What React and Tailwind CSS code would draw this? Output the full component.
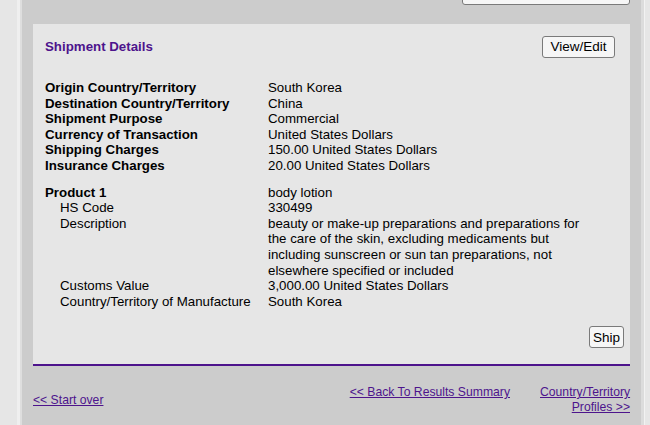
import React from 'react';

const font = { fontFamily: '"Liberation Sans", Arial, sans-serif' };

const summary = [
  ['Origin Country/Territory', 'South Korea'],
  ['Destination Country/Territory', 'China'],
  ['Shipment Purpose', 'Commercial'],
  ['Currency of Transaction', 'United States Dollars'],
  ['Shipping Charges', '150.00 United States Dollars'],
  ['Insurance Charges', '20.00 United States Dollars'],
];

const product = [
  ['HS Code', '330499'],
  [
    'Description',
    'beauty or make-up preparations and preparations for the care of the skin, excluding medicaments but including sunscreen or sun tan preparations, not elsewhere specified or included',
  ],
  ['Customs Value', '3,000.00 United States Dollars'],
  ['Country/Territory of Manufacture', 'South Korea'],
];

function Row({ label, value, bold, indent }) {
  return (
    <div className="flex">
      <div className={`w-[223px] shrink-0 ${bold ? 'font-bold' : ''} ${indent ? 'pl-[15px]' : ''}`}>{label}</div>
      <div className="w-[325px]">{value}</div>
    </div>
  );
}

function Button({ children, className = '' }) {
  return (
    <button
      className={`flex items-center justify-center bg-[#f6f6f6] border border-[#7a7a7a] rounded-[3px] text-[13.5px] text-black leading-none whitespace-nowrap ${className}`}
    >
      {children}
    </button>
  );
}

export default function App() {
  return (
    <div className="w-[650px] h-[425px] overflow-hidden flex bg-[#e6e6e6] text-black" style={font}>
      <div className="w-[17px] shrink-0" />
      <div className="w-[3px] shrink-0 bg-[#efefef]" />
      <div className="w-[2px] shrink-0 bg-[#dedede]" />
      <div className="w-[619px] shrink-0 bg-[#cccccc] pl-[11px] pr-[11px]">
        <div className="flex justify-end mt-[-17px]">
          <Button className="w-[168px] h-[22px] bg-[#f3f3f3]">Print selected documents</Button>
        </div>
        <div className="mt-[19px] bg-[#e6e6e6] border-b-2 border-[#4d148c] px-[12px] pt-[12px] pb-[16px] text-[13.3px] leading-[15.6px]">
          <div className="flex items-center justify-between pr-[3px]">
            <h2 className="font-bold text-[#4d148c] text-[13.3px]">Shipment Details</h2>
            <Button className="w-[73px] h-[22px]">View/Edit</Button>
          </div>
          <div className="mt-[22px]">
            {summary.map(([l, v]) => (
              <Row key={l} label={l} value={v} bold />
            ))}
          </div>
          <div className="mt-[11px]">
            <Row label="Product 1" value="body lotion" bold />
            {product.map(([l, v]) => (
              <Row key={l} label={l} value={v} indent />
            ))}
          </div>
          <div className="flex justify-end mt-[17px] mr-[-6px]">
            <Button className="w-[35px] h-[22px]">Ship</Button>
          </div>
        </div>
        <div className="flex items-center justify-between mt-[19px] text-[12.2px] leading-[15px] text-[#4d148c]">
          <a href="#" className="underline">&lt;&lt; Start over</a>
          <div className="flex items-start gap-[30px]">
            <a href="#" className="underline">&lt;&lt; Back To Results Summary</a>
            <a href="#" className="underline text-right w-[90px]">Country/Territory Profiles &gt;&gt;</a>
          </div>
        </div>
      </div>
      <div className="w-[3px] shrink-0 bg-[#dcdcdc]" />
      <div className="w-[1px] shrink-0 bg-[#f2f2f2]" />
    </div>
  );
}
